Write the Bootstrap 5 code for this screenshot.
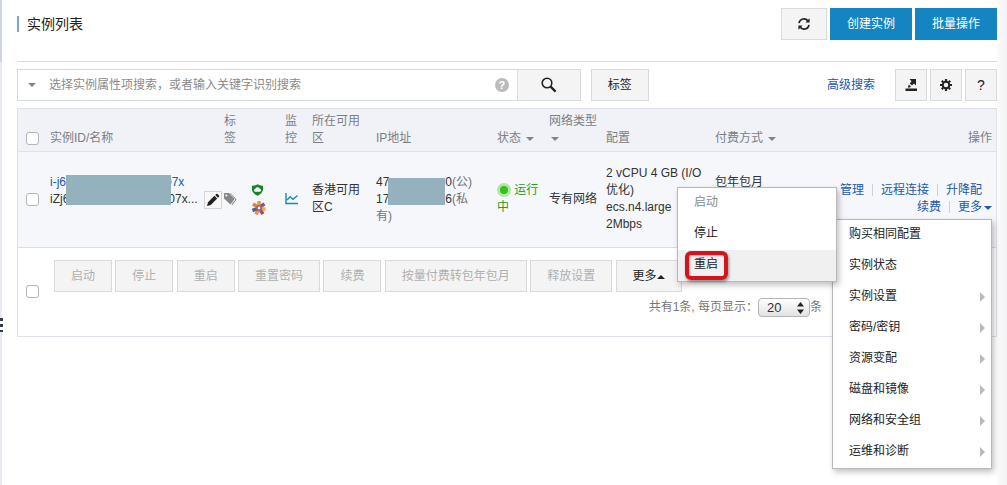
<!DOCTYPE html>
<html lang="zh-CN">
<head>
<meta charset="utf-8">
<meta name="viewport" content="width=device-width, initial-scale=1">
<title>实例列表</title>
<link href="https://cdn.jsdelivr.net/npm/bootstrap@5.3.0/dist/css/bootstrap.min.css" rel="stylesheet">
<style>
body{font-family:"Liberation Sans","Noto Sans CJK SC",sans-serif;font-size:12px;line-height:17px;color:#333;background:#fff}
a{color:#2158b0;text-decoration:none}
.page-wrap{min-height:100vh;padding:8px 0 18px 15px}
.edge-rail{width:2px;background:linear-gradient(#cfd4e2 62px,#e9eaf1 62px)}
.edge-handle{left:0;top:318px;width:3px;height:14px;background:repeating-linear-gradient(#333b4d 0 3px,#fff 3px 6px)}
.edge-right{width:10px;background:linear-gradient(90deg,#fcfcfc,#f2f2f3)}
.title-row{padding-bottom:21px;border-bottom:1px solid #d9dbdf}
.page-title{font-size:14px;line-height:16px;border-left:2px solid #7aa5dc;padding-left:8px;color:#222}
.btn{--bs-btn-font-size:12px;--bs-btn-line-height:17px;--bs-btn-border-radius:0;height:32px;padding:0 16px;line-height:30px}
.btn-plain,.btn-plain:disabled{background:#f4f4f5;border-color:#d9dadc;color:#222;opacity:1}
.btn-plain:disabled{color:#b0b0b0}
.btn-main{background:#1485c0;border-color:#1485c0;color:#fff}
.btn-square{width:32px;padding:0;font-size:14px}
.btn-refresh{width:46px;padding:0}
.btn-find{width:64px;padding:0}
.btn-tags{margin-left:10px}
.adv-link{margin-right:20px}
.btn svg,.pick svg{display:block;margin:auto}
.tools-row{margin:7px 0}
.gap-3px{gap:3px}
.search-box{width:51%;max-width:500px;height:32px;border:1px solid #d5d8dc;border-right:0;padding:0 8px 0 10px}
.search-box input{font-size:12px;color:#555;outline:0;margin-left:13px}
.search-box input::placeholder{color:#8b8b8b}
.caret-dn{display:inline-block;border:4px solid transparent;border-top:4px solid #808389;border-bottom:0;vertical-align:1px}
.caret-up{display:inline-block;border:4px solid transparent;border-bottom:4px solid #222;border-top:0;vertical-align:1px}
.hint{width:14px;height:14px;line-height:14px;border-radius:50%;background:#bbb;color:#fff;font-weight:700;font-size:11px;padding:0;border:0}
.list-frame{border:1px solid #dfe1ea}
.grid-table{width:100%;table-layout:fixed;border-collapse:separate;border-spacing:0}
.grid-table th{font-weight:400;color:#7c7e84;background:#f0f2f8;vertical-align:bottom;padding:4px 8px 4px 0;border-bottom:1px solid #dde1eb}
.grid-table th .caret-dn{margin-left:2px}
.grid-table td{vertical-align:middle;padding:13px 8px 14px 0}
.line-row td{background:#f6f7fa;border-bottom:1px solid #dcdde0}
.grid-table .pick{padding-left:8px;padding-right:0}
.pick input{display:block;width:13px;height:13px;margin:2px 0;appearance:none;border:1px solid #b4b4b4;border-radius:3px;background:#fff}
.pick input:checked{background:#1485c0}
.grid-table .ops{padding-right:4px;text-align:right}
.grid-table .one-up{padding-bottom:31px}
.grid-table .two-up{padding-bottom:48px}
.hidden-name{display:inline-block;width:99px}
.hidden-ip{display:inline-block;width:56px}
.cover{background:#94b1be}
.cover-name{left:16px;top:1px;width:105px;height:30px}
.cover-ip{left:12px;top:4px;width:57px;height:27px}
.edit-btn{width:18px;height:18px;border:1px solid #d5d5d5;background:#f8f8f8;padding:0;left:154px;top:17px}
.live-dot{display:inline-block;width:14px;height:14px;border-radius:50%;background:#3abd20;border:3px solid #aee9a2;vertical-align:-3px}
.ok-text{color:#2a9a1f}
.first-ops{padding-right:10px}
.sep{display:inline-block;width:1px;height:12px;background:#ccd0d6;margin:0 8px;vertical-align:-2px}
.link-btn{border:0;background:none;padding:0;color:#2158b0}
.link-btn .caret-dn{border-top-color:#2158b0;margin-left:2px}
.pop-list{position:absolute;width:160px;margin:0;padding:0;list-style:none;background:#fff;border:1px solid #b9b9b9;box-shadow:2px 3px 6px rgba(0,0,0,.25);text-align:left;z-index:5}
.pop-list button{display:flex;justify-content:space-between;align-items:center;width:100%;height:31px;border:0;background:none;padding:0 6px 2px 16px;color:#222}
.pop-list button:disabled{color:#8a8a8a}
.pop-list .hovered{background:#f0f0f0}
.more-list{right:0;top:20px}
.state-list{right:100%;bottom:0;margin-right:-4px;z-index:6}
.arrow-rt{border:5px solid transparent;border-left:5px solid #b9b9b9;border-right:0}
.red-mark{left:7px;bottom:1px;width:43px;height:29px;border:4px solid #d3141c;border-radius:6px;box-shadow:1px 2px 3px rgba(0,0,0,.4),inset 1px 1px 2px rgba(0,0,0,.3);pointer-events:none}
.grid-table .batch{padding:12px 0 19px 4px}
.batch .btn{vertical-align:top}
.pager{margin:5px 174px 0 0;color:#777;height:20px}
.pager select{width:52px;height:19px;padding:0 8px;appearance:none;border:1px solid #b5b5b5;border-radius:4px;color:#333;font-size:13px;line-height:17px;background:linear-gradient(#fff,#e2e2e2)}
.spin-arrows{right:6px;top:4px;pointer-events:none}
</style>
<script src="https://cdn.jsdelivr.net/npm/bootstrap@5.3.0/dist/js/bootstrap.bundle.min.js"></script>
</head>
<body>
<div class="d-flex position-relative">
<div class="edge-rail flex-shrink-0"></div>
<div class="edge-handle position-absolute"></div>
<main class="page-wrap flex-grow-1">
  <header class="title-row d-flex justify-content-between">
    <h1 class="page-title align-self-start mt-2 mb-0 fw-normal">实例列表</h1>
    <div class="d-flex gap-3px">
      <button class="btn btn-plain btn-refresh" type="button" aria-label="刷新">
        <svg width="14" height="14" viewBox="0 0 14 14" fill="none" stroke="#222" stroke-width="1.6"><path d="M2 6.2A5 5 0 0 1 11 4M12 7.8A5 5 0 0 1 3 10"/><path d="M12.6 1.3v4.2H8.4zM1.4 12.7V8.5h4.2z" fill="#222" stroke="none"/></svg>
      </button>
      <button class="btn btn-main" type="button">创建实例</button>
      <button class="btn btn-main" type="button">批量操作</button>
    </div>
  </header>

  <form class="tools-row d-flex align-items-center">
    <div class="search-box d-flex align-items-center">
      <span class="caret-dn"></span>
      <input class="border-0 flex-grow-1 p-0" type="text" aria-label="搜索" placeholder="选择实例属性项搜索，或者输入关键字识别搜索">
      <button class="hint" type="button">?</button>
    </div>
    <button class="btn btn-plain btn-find" type="button" aria-label="查找">
      <svg width="18" height="18" viewBox="0 0 18 18" fill="none" stroke="#222"><circle cx="7" cy="7" r="4.8" stroke-width="1.6"/><path d="M10.6 10.6l5 5" stroke-width="2.2"/></svg>
    </button>
    <button class="btn btn-plain btn-tags" type="button">标签</button>
    <a class="adv-link ms-auto" href="#">高级搜索</a>
    <div class="d-flex gap-3px">
      <button class="btn btn-plain btn-square" type="button" aria-label="导出">
        <svg width="14" height="14" viewBox="0 0 14 14" fill="#222"><path d="M1.500 10.500h11.500V13H1.500zM5.500 1h6.500v6.500L9.900 5.600 8 7.600 5.800 5.400 7.500 3.300z"/><path d="M4.800 6.500l2.100 2.100-1 .9H3.800z"/></svg>
      </button>
      <button class="btn btn-plain btn-square" type="button" aria-label="设置">
        <svg width="14" height="14" viewBox="0 0 14 14"><circle cx="7" cy="7" r="3.3" fill="none" stroke="#222" stroke-width="2"/><path d="M7 1v2M7 11v2M1 7h2M11 7h2M2.8 2.8l1.4 1.4M9.8 9.8l1.4 1.4M2.8 11.2l1.4-1.4M9.8 4.2l1.4-1.4" stroke="#222" stroke-width="2.2"/></svg>
      </button>
      <button class="btn btn-plain btn-square" type="button">?</button>
    </div>
  </form>

  <div class="list-frame">
  <table class="grid-table">
    <colgroup>
      <col style="width:32px"><col style="width:174px"><col style="width:27px"><col style="width:34px"><col style="width:27px"><col style="width:64px"><col style="width:121px"><col style="width:52px"><col style="width:57px"><col style="width:109px"><col><col style="width:170px">
    </colgroup>
    <thead>
      <tr>
        <th class="pick"><input type="checkbox" aria-label="全选"></th>
        <th>实例ID/名称</th><th>标签</th><th></th><th>监控</th><th>所在可用区</th><th>IP地址</th>
        <th class="text-nowrap">状态 <span class="caret-dn"></span></th>
        <th>网络类型 <span class="caret-dn"></span></th>
        <th>配置</th>
        <th>付费方式 <span class="caret-dn"></span></th>
        <th class="ops">操作</th>
      </tr>
    </thead>
    <tbody>
      <tr class="line-row">
        <td class="pick"><input type="checkbox" aria-label="选择实例"></td>
        <td class="one-up">
          <div class="position-relative text-nowrap">
            <a href="#">i-j6<span class="hidden-name"></span>07x</a><br>iZj6<span class="hidden-name"></span>07x...
            <span class="cover cover-name position-absolute"></span>
            <button class="edit-btn position-absolute" type="button" aria-label="编辑"><svg class="d-block m-auto" width="14" height="14" viewBox="0 0 14 14" fill="#222"><path d="M1 13l1-3.8 6.4-6.4 2.8 2.8L4.8 12zM9.2 2l1-1q.7-.6 1.4 0l1.400 1.400q.6.7 0 1.400l-1 1z"/></svg></button>
          </div>
        </td>
        <td><svg class="d-block" width="13" height="13" viewBox="0 0 13 13" fill="#858585"><path d="M0 1l.5-1H5l5.500 6-4 5.500L0 5.500zM6.500 0L12.500 6.500 8.500 12l-.8-.7 3.700-4.800L5.800 0z"/><circle cx="2.400" cy="2.400" r="1" fill="#fff"/></svg></td>
        <td>
          <svg class="d-block" width="13" height="14" viewBox="0 0 14 14"><path d="M7 .8q3 1.900 6 1.500v4Q12.500 11 7 13.200 1.500 11 1 6.300v-4Q4 2.700 7 .8z" fill="#15842b"/><path d="M4.500 8.800a1.700 1.700 0 0 1 .3-3.300 2.500 2.500 0 0 1 4.500 0 1.700 1.700 0 0 1 .3 3.300z" fill="#fff"/></svg>
          <svg class="d-block mt-1" width="16" height="14" viewBox="0 0 16 14"><g stroke-width="3.600"><path d="M8 4V0" stroke="#e4a13a"/><path d="M10 5l3.500-2" stroke="#805291"/><path d="M10.500 7.500l4 1" stroke="#e0b050"/><path d="M9.500 9.500l2.500 3.500" stroke="#a44b6d"/><path d="M7 9.500L5 13.500" stroke="#df9b3b"/><path d="M5.500 8l-4 1.500" stroke="#665398"/><path d="M6 5.500L2 3" stroke="#d2893d"/></g><circle cx="8" cy="7" r="3" fill="#a75064"/><circle cx="8" cy="7" r="1.400" fill="#fff"/></svg>
        </td>
        <td><svg class="d-block" width="14" height="12" viewBox="0 0 14 12" fill="none" stroke="#1989b8" stroke-width="1.400"><path d="M1 0v10.500h12M2 7l3.200-3.200L8 6.300 12.500 2.500"/></svg></td>
        <td>香港可用区C</td>
        <td>
          <div class="position-relative text-nowrap">47<span class="hidden-ip"></span>0<span class="text-secondary">(公)</span><br>17<span class="hidden-ip"></span>6<span class="text-secondary">(私<br>有)</span>
          <span class="cover cover-ip position-absolute"></span></div>
        </td>
        <td class="ok-text"><span class="live-dot"></span> 运行中</td>
        <td class="pe-0">专有网络</td>
        <td>2 vCPU 4 GB (I/O 优化)<br>ecs.n4.large<br>2Mbps</td>
        <td class="two-up">包年包月</td>
        <td class="ops">
          <div class="first-ops text-nowrap"><a href="#">管理</a><span class="sep"></span><a href="#">远程连接</a><span class="sep"></span><a href="#">升降配</a></div>
          <div class="text-nowrap position-relative"><a href="#">续费</a><span class="sep"></span><button class="link-btn" type="button" aria-expanded="true">更多<span class="caret-dn"></span></button>
            <ul class="pop-list more-list">
              <li><button type="button">购买相同配置</button></li>
              <li class="position-relative"><button type="button">实例状态</button>
                <ul class="pop-list state-list">
                  <li><button type="button" disabled>启动</button></li>
                  <li><button type="button">停止</button></li>
                  <li class="position-relative"><button class="hovered" type="button">重启</button><span class="red-mark position-absolute"></span></li>
                </ul>
              </li>
              <li><button type="button">实例设置<span class="arrow-rt"></span></button></li>
              <li><button type="button">密码/密钥<span class="arrow-rt"></span></button></li>
              <li><button type="button">资源变配<span class="arrow-rt"></span></button></li>
              <li><button type="button">磁盘和镜像<span class="arrow-rt"></span></button></li>
              <li><button type="button">网络和安全组<span class="arrow-rt"></span></button></li>
              <li><button type="button">运维和诊断<span class="arrow-rt"></span></button></li>
            </ul>
          </div>
        </td>
      </tr>
      <tr>
        <td class="pick"><input type="checkbox" aria-label="全选"></td>
        <td class="batch" colspan="11">
          <div>
            <button class="btn btn-plain" type="button" disabled>启动</button>
            <button class="btn btn-plain" type="button" disabled>停止</button>
            <button class="btn btn-plain" type="button" disabled>重启</button>
            <button class="btn btn-plain" type="button" disabled>重置密码</button>
            <button class="btn btn-plain" type="button" disabled>续费</button>
            <button class="btn btn-plain" type="button" disabled>按量付费转包年包月</button>
            <button class="btn btn-plain" type="button" disabled>释放设置</button>
            <button class="btn btn-plain" type="button">更多<span class="caret-up"></span></button>
          </div>
          <div class="pager d-flex justify-content-end align-items-center">
            <label for="per-page">共有1条, 每页显示：</label>
            <span class="position-relative"><select class="d-block" id="per-page"><option>20</option><option>50</option></select>
            <svg class="spin-arrows position-absolute" width="7" height="12" viewBox="0 0 7 12" fill="#222"><path d="M3.500 0L7 4.500H0zM3.500 12L0 7.500h7z"/></svg></span>
            <span>条</span>
          </div>
        </td>
      </tr>
    </tbody>
  </table>
  </div>
</main>
<div class="edge-right flex-shrink-0"></div>
</div>
</body>
</html>
